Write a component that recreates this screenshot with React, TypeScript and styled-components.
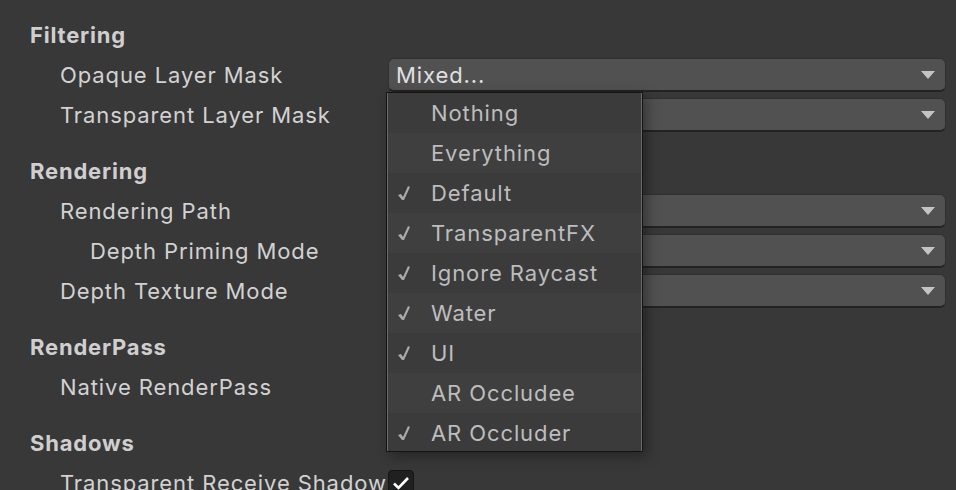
import React from "react";
import styled, { createGlobalStyle } from "styled-components";

const Global = createGlobalStyle`
  html, body { margin: 0; padding: 0; background: #383838; overflow: hidden; }
  body { font-family: Inter, "Noto Sans", sans-serif; }
`;

const Page = styled.div`
  width: 956px;
  height: 490px;
  padding: 15px 10px 0 30px;
  box-sizing: border-box;
  background: #383838;
  overflow: hidden;
`;

const Section = styled.div`
  display: flex;
  flex-direction: column;
  margin-bottom: 16px;
`;

const Header = styled.div`
  height: 40px;
  display: flex;
  align-items: center;
  font-size: 22px;
  font-weight: 700;
  letter-spacing: 0.8px;
  color: #cfcfcf;
`;

const Row = styled.div`
  height: 40px;
  display: grid;
  grid-template-columns: 356px 1fr;
  align-items: center;
`;

const Label = styled.div<{ $indent: number }>`
  padding-left: ${(p) => p.$indent}px;
  font-size: 22px;
  letter-spacing: 0.9px;
  color: #d2d2d2;
  white-space: nowrap;
  overflow: hidden;
  line-height: 40px;
  min-width: 0;
`;

const FieldWrap = styled.div`
  position: relative;
  padding-left: 2px;
  height: 40px;
  display: flex;
  align-items: center;
`;

const Dropdown = styled.div`
  flex: 1;
  height: 34px;
  box-sizing: border-box;
  background: #515151;
  border: 1px solid #303030;
  border-bottom: 2px solid #232323;
  border-radius: 6px;
  display: flex;
  align-items: center;
  justify-content: space-between;
  padding: 0 10px 0 7px;
  font-size: 22px;
  letter-spacing: 0.9px;
  color: #e0e0e0;
`;

const Arrow = styled.svg`
  width: 14px;
  height: 8px;
  flex: none;
`;

const Checkbox = styled.div`
  width: 26px;
  height: 26px;
  box-sizing: border-box;
  background: #202020;
  border: 1px solid #141414;
  border-radius: 4px;
  display: flex;
  align-items: center;
  justify-content: center;
`;

const Menu = styled.div`
  position: absolute;
  left: 0;
  top: 37px;
  width: 257px;
  height: 360px;
  box-sizing: border-box;
  border: 1px solid #141414;
  box-shadow: inset 0 0 0 1px #6a6a6a, 4px 4px 12px rgba(0, 0, 0, 0.35);
  background: #3c3c3c;
  overflow: hidden;
  z-index: 5;
  padding: 0 1px 1px 1px;
`;

const Item = styled.div<{ $alt: boolean }>`
  height: 40px;
  display: flex;
  align-items: center;
  background: ${(p) => (p.$alt ? "#3f3f3f" : "#3b3b3b")};
  font-size: 22px;
  letter-spacing: 0.9px;
  color: #bdbdbd;
`;

const CheckSlot = styled.div`
  width: 35px;
  padding-left: 8px;
  box-sizing: border-box;
  display: flex;
  align-items: center;
  flex: none;
  margin-right: 8px;
`;

const MenuCheck = () => (
  <svg width="16" height="18" viewBox="0 0 16 18">
    <path d="M2 11 L5 10 L7 13 L12 2 L14 3 L8 16 L6 16 Z" fill="#a9a9a9" />
  </svg>
);

const DownArrow = () => (
  <Arrow viewBox="0 0 14 8">
    <path d="M0 0 H14 L7 8 Z" fill="#c4c4c4" />
  </Arrow>
);

const layers: [string, boolean][] = [
  ["Nothing", false],
  ["Everything", false],
  ["Default", true],
  ["TransparentFX", true],
  ["Ignore Raycast", true],
  ["Water", true],
  ["UI", true],
  ["AR Occludee", false],
  ["AR Occluder", true],
];

const DropdownField = ({ value, children }: { value?: string; children?: React.ReactNode }) => (
  <FieldWrap>
    <Dropdown>
      <span>{value ?? ""}</span>
      <DownArrow />
    </Dropdown>
    {children}
  </FieldWrap>
);

const CheckField = () => (
  <FieldWrap>
    <Checkbox>
      <svg width="18" height="14" viewBox="0 0 18 14">
        <path d="M2 7.5 L6.5 12 L16 2" stroke="#ffffff" strokeWidth="2.6" fill="none" />
      </svg>
    </Checkbox>
  </FieldWrap>
);

export default function App() {
  return (
    <>
      <Global />
      <Page>
        <Section>
          <Header>Filtering</Header>
          <Row>
            <Label $indent={30}>Opaque Layer Mask</Label>
            <DropdownField value="Mixed...">
              <Menu>
                {layers.map(([name, on], i) => (
                  <Item key={name} $alt={i % 2 === 1}>
                    <CheckSlot>{on && <MenuCheck />}</CheckSlot>
                    {name}
                  </Item>
                ))}
              </Menu>
            </DropdownField>
          </Row>
          <Row>
            <Label $indent={30}>Transparent Layer Mask</Label>
            <DropdownField />
          </Row>
        </Section>
        <Section>
          <Header>Rendering</Header>
          <Row>
            <Label $indent={30}>Rendering Path</Label>
            <DropdownField />
          </Row>
          <Row>
            <Label $indent={60}>Depth Priming Mode</Label>
            <DropdownField />
          </Row>
          <Row>
            <Label $indent={30}>Depth Texture Mode</Label>
            <DropdownField />
          </Row>
        </Section>
        <Section>
          <Header>RenderPass</Header>
          <Row>
            <Label $indent={30}>Native RenderPass</Label>
            <CheckField />
          </Row>
        </Section>
        <Section>
          <Header>Shadows</Header>
          <Row>
            <Label $indent={30}>Transparent Receive Shadows</Label>
            <CheckField />
          </Row>
        </Section>
      </Page>
    </>
  );
}
